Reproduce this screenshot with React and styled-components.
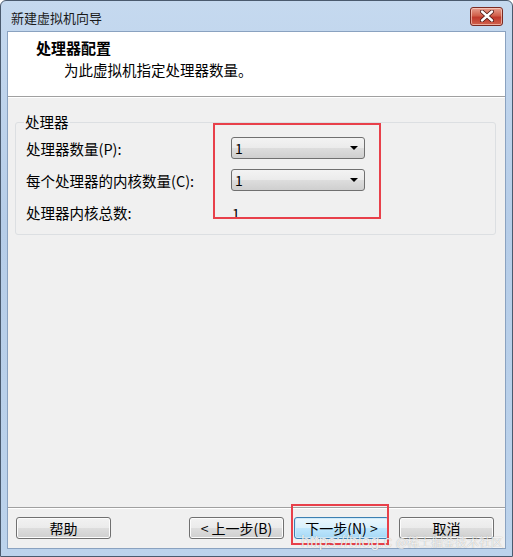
import React from 'react';
import styled, { createGlobalStyle } from 'styled-components';

const GlobalStyle = createGlobalStyle`
    * {
        box-sizing: border-box;
    }

    body {
        margin: 0;
        font-family: "Noto Sans CJK SC", "Liberation Sans", sans-serif;
        font-size: 14px;
        color: #000;
    }
`;

// Window frame
const Frame = styled.div`
    position: relative;
    width: 513px;
    height: 557px;
    display: flex;
    flex-direction: column;
    border: 1px solid #4a5a6e;
    border-radius: 6px 6px 0 0;
    background: linear-gradient(180deg, #c5d9ef 0%, #b6cde8 40%, #bcd3ec 100%);
    padding: 0 6px 7px 6px;
`;

const TitleBar = styled.div`
    height: 30px;
    display: flex;
    align-items: center;
    justify-content: space-between;
    padding: 2px 3px 0 4px;
`;

const Caption = styled.span`
    font-size: 13px;
    color: #1a1a1a;
`;

const CloseButton = styled.div`
    width: 33px;
    height: 19px;
    margin-top: -2px;
    border: 1px solid #7a2a22;
    border-radius: 3px;
    background: linear-gradient(180deg, #e7a090 0%, #d1604a 45%, #c0392b 55%, #d0624c 100%);
    box-shadow: inset 0 0 0 1px rgba(255, 220, 210, 0.6);
    display: flex;
    align-items: center;
    justify-content: center;
`;

const Client = styled.div`
    flex: 1;
    display: flex;
    flex-direction: column;
    border: 1px solid #8aa2c0;
    background: #f0f0f0;
`;

// Header
const Header = styled.div`
    height: 65px;
    background: #fff;
    border-bottom: 1px solid #a0a0a0;
    box-shadow: 0 1px 0 #fff;
    padding: 6px 0 0 28px;
`;

const HeaderTitle = styled.div`
    font-weight: bold;
    font-size: 15px;
    line-height: 20px;
`;

const HeaderSub = styled.div`
    margin-top: 2px;
    padding-left: 28px;
    font-size: 14.5px;
    line-height: 20px;
`;

// Body
const Body = styled.div`
    flex: 1;
    padding: 17px 9px 0 7px;
`;

const GroupBox = styled.fieldset`
    position: relative;
    margin: 0;
    height: 121px;
    border: 1px solid #dcdfe2;
    border-radius: 3px;
    padding: 0 0 0 10px;
`;

const Legend = styled.legend`
    padding: 0 1px;
    margin-left: -2px;
    font-size: 14.5px;
    line-height: 16px;
`;

const Grid = styled.div`
    display: grid;
    grid-template-columns: 205px 134px;
    grid-auto-rows: 32px;
    align-items: center;
    margin-top: 2px;
`;

const Label = styled.span`
    font-size: 14.5px;
`;

const Combo = styled.div`
    height: 22px;
    border: 1px solid #707070;
    border-radius: 3px;
    background: linear-gradient(180deg, #f3f3f3 0%, #ebebeb 48%, #dddddd 52%, #cfcfcf 100%);
    display: flex;
    align-items: center;
    justify-content: space-between;
    padding: 0 6px 0 3px;
    font-size: 14px;
`;

const Arrow = styled.span`
    width: 0;
    height: 0;
    border-left: 4px solid transparent;
    border-right: 4px solid transparent;
    border-top: 4px solid #000;
`;

const Value = styled.span`
    padding-left: 1px;
    padding-top: 2px;
    font-size: 14px;
`;

const Mark = styled.div`
    position: absolute;
    border: 2px solid #e8404a;
    pointer-events: none;
`;

// Footer
const Footer = styled.div`
    height: 41px;
    border-top: 1px solid #a0a0a0;
    box-shadow: inset 0 1px 0 #fff;
    display: flex;
    align-items: center;
    padding: 0 0 0 8px;
    gap: 10px;
`;

const Button = styled.div`
    position: relative;
    width: 95px;
    height: 22px;
    border: 1px solid ${props => (props.focused ? '#3c7fb1' : '#707070')};
    border-radius: 3px;
    background: ${props =>
        props.focused
            ? 'linear-gradient(180deg, #eaf6fd 0%, #d9f0fc 48%, #bee6fd 52%, #a7d9f5 100%)'
            : 'linear-gradient(180deg, #f2f2f2 0%, #ebebeb 48%, #dddddd 52%, #cfcfcf 100%)'};
    box-shadow: inset 0 0 0 1px ${props => (props.focused ? '#cfeaf9' : '#fcfcfc')};
    display: flex;
    align-items: center;
    justify-content: center;
    font-size: 14px;
    ${props => (props.push ? 'margin-left: 68px;' : '')}
`;

const Watermark = styled.div`
    position: absolute;
    left: 300px;
    top: 533px;
    display: flex;
    align-items: baseline;
    gap: 4px;
    color: rgba(255, 255, 255, 0.85);
    text-shadow: 0 0 1px rgba(0, 0, 0, 0.35);
    font-family: "Liberation Sans", "Noto Sans CJK SC", sans-serif;
    line-height: 16px;
    pointer-events: none;
    span:first-child {
        font-size: 16px;
    }
    span:last-child {
        font-size: 12px;
        font-family: "Noto Sans CJK SC", sans-serif;
    }
`;

const CloseIcon = () => (
    <svg width="14" height="12" viewBox="0 0 14 12">
        <path
            d="M2 1.5 L12 10.5 M12 1.5 L2 10.5"
            stroke="#4a1410"
            strokeWidth="4"
            strokeLinecap="round"
        />
        <path
            d="M2 1.5 L12 10.5 M12 1.5 L2 10.5"
            stroke="#fff"
            strokeWidth="2.4"
            strokeLinecap="round"
        />
    </svg>
);

function App() {
    return (
        <>
            <GlobalStyle />
            <Frame>
                <TitleBar>
                    <Caption>新建虚拟机向导</Caption>
                    <CloseButton>
                        <CloseIcon />
                    </CloseButton>
                </TitleBar>
                <Client>
                    <Header>
                        <HeaderTitle>处理器配置</HeaderTitle>
                        <HeaderSub>为此虚拟机指定处理器数量。</HeaderSub>
                    </Header>
                    <Body>
                        <GroupBox>
                            <Legend>处理器</Legend>
                            <Grid>
                                <Label>处理器数量(P):</Label>
                                <Combo>
                                    1<Arrow />
                                </Combo>
                                <Label>每个处理器的内核数量(C):</Label>
                                <Combo>
                                    1<Arrow />
                                </Combo>
                                <Label>处理器内核总数:</Label>
                                <Value>1</Value>
                            </Grid>
                            <Mark style={{ left: 197, top: -7, width: 168, height: 96 }} />
                        </GroupBox>
                    </Body>
                    <Footer>
                        <Button>帮助</Button>
                        <Button push>&lt; 上一步(B)</Button>
                        <Button focused>
                            下一步(N) &gt;
                            <Mark style={{ left: -4, top: -14, width: 98, height: 41 }} />
                        </Button>
                        <Button>取消</Button>
                    </Footer>
                </Client>
                <Watermark>
                    <span>https://blog.c</span>
                    <span>@稀土掘金技术社区</span>
                </Watermark>
            </Frame>
        </>
    );
}

export default App;
